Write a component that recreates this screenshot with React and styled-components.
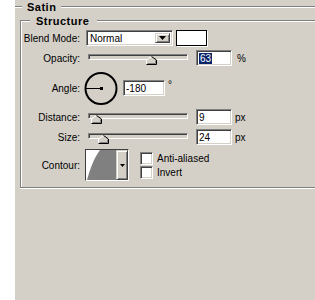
import React from "react";
import styled, { createGlobalStyle, css } from "styled-components";

const GlobalStyle = createGlobalStyle`
  html, body { margin: 0; padding: 0; background: #fff; }
  body {
    font-family: "Liberation Sans", Arial, sans-serif;
    font-size: 10px;
    color: #000;
  }
`;

const sunken = css`
  box-sizing: border-box;
  border: 1px solid;
  border-color: #808080 #fff #fff #808080;
  box-shadow: inset 1px 1px 0 #404040, inset -1px -1px 0 #d4d0c8;
`;

const raised = css`
  box-sizing: border-box;
  border: 1px solid;
  border-color: #d4d0c8 #404040 #404040 #d4d0c8;
  box-shadow: inset 1px 1px 0 #fff, inset -1px -1px 0 #808080;
  background: #d4d0c8;
`;

const Panel = styled.div`
  margin-left: 15px;
  width: 300px;
  height: 300px;
  background: #d4d0c8;
  overflow: hidden;
  display: flex;
  flex-direction: column;
`;

const Header = styled.div`
  display: flex;
  align-items: center;
  height: 14px;
  flex: none;
  margin-top: ${(p) => p.$mt || 0}px;
`;

const Etch = styled.div`
  height: 0;
  border-top: 1px solid #808080;
  border-bottom: 1px solid #fff;
  flex: ${(p) => (p.$w ? `0 0 ${p.$w}px` : "1 1 auto")};
`;

const HeaderText = styled.span`
  font-weight: bold;
  font-size: 11px;
  letter-spacing: 0.5px;
  line-height: 14px;
  padding: 0 ${(p) => p.$r}px 0 ${(p) => p.$l}px;
  white-space: nowrap;
`;

const Group = styled.div`
  margin: 6px 0 0 5px;
  width: 320px;
  border-left: 1px solid #808080;
  border-bottom: 1px solid #808080;
  box-shadow: inset 1px 0 0 #fff, 0 1px 0 #fff;
  padding-bottom: 6px;
  display: flex;
  flex-direction: column;
`;

const Row = styled.div`
  display: flex;
  align-items: center;
  height: ${(p) => p.$h || 16}px;
  margin-top: ${(p) => p.$mt}px;
`;

const Label = styled.div`
  width: 59px;
  flex: none;
  text-align: right;
  white-space: nowrap;
`;

const Select = styled.div`
  ${sunken};
  margin-left: 6px;
  width: 87px;
  height: 16px;
  background: #fff;
  display: flex;
  align-items: stretch;
  padding: 2px;
`;

const SelectText = styled.div`
  flex: 1;
  display: flex;
  align-items: center;
  padding-left: 1px;
`;

const DropButton = styled.div`
  ${raised};
  width: 15px;
  display: flex;
  align-items: center;
  justify-content: center;
`;

const Swatch = styled.div`
  box-sizing: border-box;
  margin-left: 3px;
  width: 31px;
  height: 16px;
  background: #fff;
  border: 1px solid #000;
  box-shadow: 1px 1px 0 #fff;
`;

const SliderWrap = styled.div`
  position: relative;
  margin-left: 6px;
  width: 104px;
  height: 16px;
  flex: none;
`;

const Track = styled.div`
  ${sunken};
  margin: 4px 0 0 2px;
  width: 100px;
  height: 6px;
  background: #d4d0c8;
`;

const Thumb = styled.svg`
  position: absolute;
  top: 6px;
  width: 11px;
  height: 9px;
`;

const Field = styled.div`
  ${sunken};
  margin-left: ${(p) => p.$ml}px;
  width: ${(p) => p.$w}px;
  height: 16px;
  background: #fff;
  display: flex;
  align-items: center;
  padding-left: 2px;
  flex: none;
`;

const Selected = styled.span`
  background: #0a246a;
  color: #fff;
  padding: 0 1px;
  line-height: 11px;
`;

const Unit = styled.span`
  margin-left: ${(p) => p.$ml || 4}px;
  align-self: ${(p) => (p.$top ? "flex-start" : "center")};
  margin-top: ${(p) => (p.$top ? 7 : 0)}px;
`;

const Dial = styled.svg`
  margin-left: 4px;
  width: 34px;
  height: 33px;
  flex: none;
`;

const ContourBox = styled.div`
  box-sizing: border-box;
  margin-left: 5px;
  width: 44px;
  height: 32px;
  border: 1px solid;
  border-color: #404040 #fff #fff #404040;
  display: flex;
  background: #fff;
  flex: none;
`;

const Preview = styled.svg`
  flex: 1;
  height: 100%;
  display: block;
`;

const Strip = styled.div`
  ${raised};
  width: 12px;
  display: flex;
  align-items: center;
  justify-content: center;
`;

const Checks = styled.div`
  display: flex;
  flex-direction: column;
  gap: 1px;
  margin-left: 11px;
`;

const CheckRow = styled.label`
  display: flex;
  align-items: center;
  gap: 4px;
  height: 13px;
`;

const Box = styled.span`
  ${sunken};
  width: 13px;
  height: 13px;
  background: #fff;
  flex: none;
`;

const Arrow = ({ w = 7, h = 4 }) => (
  <svg width={w} height={h} viewBox={`0 0 ${w} ${h}`}>
    <polygon points={`0,0 ${w},0 ${w / 2},${h}`} fill="#000" />
  </svg>
);

const Slider = ({ pos }) => (
  <SliderWrap>
    <Track />
    <Thumb viewBox="0 0 11 9" style={{ left: 2 + pos - 5 }}>
      <polygon points="0.5,8.5 0.5,4 5.5,0.5 10.5,4 10.5,8.5" fill="#d4d0c8" />
      <polyline points="0.5,8 0.5,4 5.5,0.5" fill="none" stroke="#fff" />
      <polyline points="5.5,0.5 10.5,4 10.5,8.5 0.5,8.5" fill="none" stroke="#000" />
      <polyline points="9.5,4.5 9.5,7.5 1.5,7.5" fill="none" stroke="#808080" />
    </Thumb>
  </SliderWrap>
);

export default function App() {
  return (
    <>
      <GlobalStyle />
      <Panel>
        <Header>
          <Etch $w={7} />
          <HeaderText $l={5} $r={5}>Satin</HeaderText>
          <Etch />
        </Header>
        <Group>
          <Header $mt={-6}>
            <Etch $w={9} />
            <HeaderText $l={6} $r={8}>Structure</HeaderText>
            <Etch />
          </Header>
          <Row $mt={2}>
            <Label>Blend Mode:</Label>
            <Select>
              <SelectText>Normal</SelectText>
              <DropButton>
                <Arrow />
              </DropButton>
            </Select>
            <Swatch />
          </Row>
          <Row $mt={4}>
            <Label>Opacity:</Label>
            <Slider pos={63} />
            <Field $w={36} $ml={6}>
              <Selected>63</Selected>
            </Field>
            <Unit $ml={5}>%</Unit>
          </Row>
          <Row $mt={6} $h={32}>
            <Label>Angle:</Label>
            <Dial viewBox="0 0 34 33">
              <circle cx="17" cy="16.5" r="15.5" fill="none" stroke="#000" strokeWidth="2" />
              <line x1="2" y1="16.5" x2="17" y2="16.5" stroke="#000" strokeWidth="1" />
              <rect x="16" y="15" width="3" height="3" fill="#000" />
            </Dial>
            <Field $w={42} $ml={5}>-180</Field>
            <Unit $ml={3} $top>°</Unit>
          </Row>
          <Row $mt={5}>
            <Label>Distance:</Label>
            <Slider pos={8} />
            <Field $w={36} $ml={6}>9</Field>
            <Unit $ml={3}>px</Unit>
          </Row>
          <Row $mt={4}>
            <Label>Size:</Label>
            <Slider pos={15} />
            <Field $w={36} $ml={6}>24</Field>
            <Unit $ml={3}>px</Unit>
          </Row>
          <Row $mt={4} $h={32}>
            <Label>Contour:</Label>
            <ContourBox>
              <Preview viewBox="0 0 30 30" preserveAspectRatio="none">
                <path d="M1 30 C 4 19, 8 8, 14 0 L 30 0 L 30 30 Z" fill="#808080" />
              </Preview>
              <Strip>
                <Arrow w={5} h={3} />
              </Strip>
            </ContourBox>
            <Checks>
              <CheckRow>
                <Box />
                Anti-aliased
              </CheckRow>
              <CheckRow>
                <Box />
                Invert
              </CheckRow>
            </Checks>
          </Row>
        </Group>
      </Panel>
    </>
  );
}
